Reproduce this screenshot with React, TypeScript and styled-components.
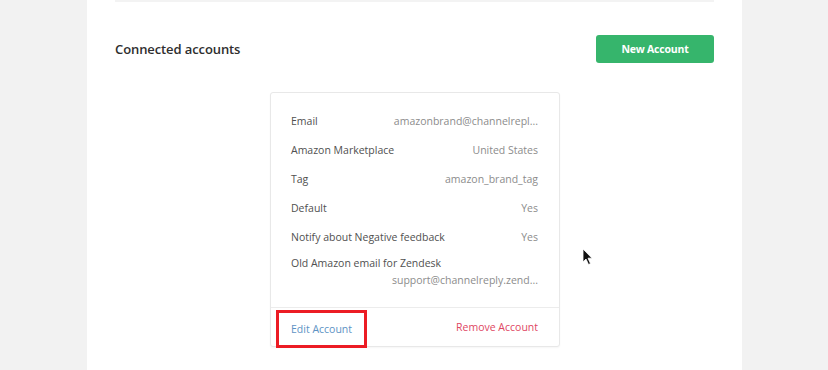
import styled, { createGlobalStyle } from "styled-components";

const GlobalStyle = createGlobalStyle`
  html, body {
    margin: 0;
    padding: 0;
    background: #f2f2f2;
    font-family: "Open Sans", "Liberation Sans", sans-serif;
  }
`;

interface Row {
  label: string;
  value: string;
  stacked?: boolean;
}

const rows: Row[] = [
  { label: "Email", value: "amazonbrand@channelrepl..." },
  { label: "Amazon Marketplace", value: "United States" },
  { label: "Tag", value: "amazon_brand_tag" },
  { label: "Default", value: "Yes" },
  { label: "Notify about Negative feedback", value: "Yes" },
  {
    label: "Old Amazon email for Zendesk",
    value: "support@channelreply.zend...",
    stacked: true,
  },
];

export default function App() {
  return (
    <>
      <GlobalStyle />
      <Page>
        <Panel>
          <TopStrip />
          <Header>
            <Title>Connected accounts</Title>
            <GreenButton>New Account</GreenButton>
          </Header>
          <CardWrap>
            <Card>
              <CardBody>
                {rows.map((r) =>
                  r.stacked ? (
                    <StackedRow key={r.label}>
                      <Label>{r.label}</Label>
                      <Value>{r.value}</Value>
                    </StackedRow>
                  ) : (
                    <InfoRow key={r.label}>
                      <Label>{r.label}</Label>
                      <Value>{r.value}</Value>
                    </InfoRow>
                  )
                )}
              </CardBody>
              <CardFooter>
                <FooterLink $highlight>Edit Account</FooterLink>
                <FooterLink $danger>Remove Account</FooterLink>
              </CardFooter>
            </Card>
            <Cursor width="12" height="18" viewBox="0 0 12 18">
              <path
                d="M1 1 L1 14 L4 11 L6.5 16.5 L8.5 15.6 L6 10.2 L10 10.2 Z"
                fill="#111"
                stroke="#fff"
                strokeWidth="0.8"
              />
            </Cursor>
          </CardWrap>
        </Panel>
      </Page>
    </>
  );
}

const Page = styled.div`
  width: 828px;
  height: 370px;
  overflow: hidden;
  display: flex;
  justify-content: flex-start;
  padding-left: 87px;
  box-sizing: border-box;
`;

const Panel = styled.div`
  width: 655px;
  height: 370px;
  background: #ffffff;
  padding: 0 28px 0 28px;
  box-sizing: border-box;
  display: flex;
  flex-direction: column;
`;

const TopStrip = styled.div`
  height: 2px;
  background: #f3f3f3;
`;

const Header = styled.div`
  display: flex;
  justify-content: space-between;
  align-items: center;
  margin-top: 33px;
  height: 28px;
`;

const Title = styled.h2`
  margin: 0;
  margin-top: -1px;
  font-size: 13px;
  font-weight: 600;
  color: #2e2e2e;
  letter-spacing: -0.1px;
`;

const GreenButton = styled.button`
  width: 118px;
  height: 28px;
  border: none;
  border-radius: 3px;
  background: #36b56c;
  color: #ffffff;
  font-family: "Open Sans", "Liberation Sans", sans-serif;
  font-size: 10.5px;
  font-weight: 700;
  letter-spacing: -0.2px;
  cursor: pointer;
`;

const CardWrap = styled.div`
  position: relative;
  display: flex;
  justify-content: flex-start;
  padding-left: 155px;
  margin-top: 29px;
`;

const Card = styled.div`
  width: 288px;
  border: 1px solid #e8e8e8;
  border-radius: 3px;
  box-shadow: 0 1px 2px rgba(0, 0, 0, 0.04);
  background: #fff;
`;

const CardBody = styled.div`
  padding: 13px 21px 18px 20px;
`;

const InfoRow = styled.div`
  display: flex;
  justify-content: space-between;
  align-items: center;
  height: 29px;
`;

const StackedRow = styled.div`
  display: flex;
  flex-direction: column;
  padding-top: 4px;
  line-height: 17px;

  & > span:last-child {
    text-align: right;
  }
`;

const Label = styled.span`
  font-size: 10.5px;
  color: #505050;
`;

const Value = styled.span`
  font-size: 10.5px;
  color: #8c8c8c;
`;

const CardFooter = styled.div`
  border-top: 1px solid #ececec;
  display: flex;
  justify-content: space-between;
  align-items: center;
  height: 38px;
  padding: 0 21px 0 5px;
`;

const FooterLink = styled.a<{ $highlight?: boolean; $danger?: boolean }>`
  font-size: 10.5px;
  color: ${(p) => (p.$danger ? "#e04763" : "#5e93c4")};
  cursor: pointer;
  ${(p) =>
    p.$highlight
      ? `
    border: 3px solid #ec1c24;
    padding: 6px 12px 6px 12px;
    height: 20px;
    line-height: 20px;
    margin-top: 4px;
  `
      : ""}
`;

const Cursor = styled.svg`
  position: absolute;
  left: 467px;
  top: 156px;
`;
